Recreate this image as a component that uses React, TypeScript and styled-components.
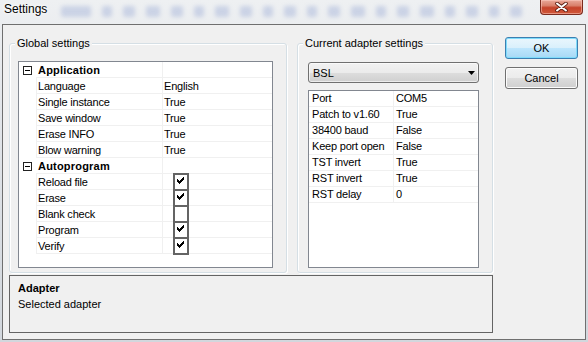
import React from 'react'
import styled, { createGlobalStyle, css } from 'styled-components'

const FONT = `"Liberation Sans", Arial, sans-serif`

type Item = { name: string; value?: string; checked?: boolean }
type Category = { title: string; items: Item[] }

const globalCategories: Category[] = [
  {
    title: 'Application',
    items: [
      { name: 'Language', value: 'English' },
      { name: 'Single instance', value: 'True' },
      { name: 'Save window', value: 'True' },
      { name: 'Erase INFO', value: 'True' },
      { name: 'Blow warning', value: 'True' },
    ],
  },
  {
    title: 'Autoprogram',
    items: [
      { name: 'Reload file', checked: true },
      { name: 'Erase', checked: true },
      { name: 'Blank check', checked: false },
      { name: 'Program', checked: true },
      { name: 'Verify', checked: true },
    ],
  },
]

const adapterItems: Item[] = [
  { name: 'Port', value: 'COM5' },
  { name: 'Patch to v1.60', value: 'True' },
  { name: '38400 baud', value: 'False' },
  { name: 'Keep port open', value: 'False' },
  { name: 'TST invert', value: 'True' },
  { name: 'RST invert', value: 'True' },
  { name: 'RST delay', value: '0' },
]

// blurred things seen through the glass title bar
const glassBlobs = [30, 10, 12, 14, 12, 10, 14, 12, 10, 12, 10, 12, 14, 10, 12, 14, 10, 12, 10, 12]

const GlobalStyle = createGlobalStyle`
  html, body {
    margin: 0;
    padding: 0;
  }
  body {
    font-family: ${FONT};
    font-size: 11px;
    color: #000;
    background: #d8dce1;
  }
  * {
    box-sizing: border-box;
  }
`

const Window = styled.div`
  width: 588px;
  height: 342px;
  display: flex;
  flex-direction: column;
  overflow: hidden;
  background: linear-gradient(180deg, #eef0f2 0%, #e3e6ea 30%, #d2d7dd 100%);
`

const TitleBar = styled.div`
  height: 24px;
  display: flex;
  align-items: flex-start;
  padding: 0 5px 0 4px;
`

const Title = styled.div`
  font-size: 12px;
  line-height: 15px;
  margin-top: 2px;
  text-shadow: 0 0 6px #fff, 0 0 3px #fff;
`

const GlassRow = styled.div`
  flex: 1;
  display: flex;
  gap: 11px;
  padding: 6px 0 0 14px;
  filter: blur(2px);
  opacity: 0.35;
`

const GlassBlob = styled.span<{ $w: number }>`
  width: ${({ $w }) => $w}px;
  height: 11px;
  border-radius: 2px;
  background: #8c9fd0;
`

const CloseButton = styled.div`
  width: 43px;
  height: 15px;
  display: flex;
  align-items: center;
  justify-content: center;
  border: 1px solid #7a2b1e;
  border-top: none;
  border-radius: 0 0 4px 4px;
  background: linear-gradient(180deg, #e9a99a 0%, #d9806b 40%, #c5432b 55%, #d0583a 100%);
  box-shadow: inset 0 0 0 1px rgba(255, 210, 200, 0.5);
`

const Client = styled.div`
  flex: 1;
  margin: 0 2px 2px 2px;
  border: 1px solid #6f6f6f;
  background: #f0f0f0;
  padding-top: 12px;
  display: flex;
  flex-direction: column;
`

const TopRow = styled.div`
  display: flex;
  align-items: flex-start;
  padding-left: 6px;
`

const GroupBox = styled.div<{ $w: number; $gap?: number; $padLeft: number; $padTop: number }>`
  position: relative;
  width: ${({ $w }) => $w}px;
  height: 230px;
  margin-top: 6px;
  margin-left: ${({ $gap }) => $gap ?? 0}px;
  padding: ${({ $padTop, $padLeft }) => `${$padTop}px 0 0 ${$padLeft}px`};
  border: 1px solid #d5dfe5;
  border-radius: 3px;
  box-shadow: inset 1px 1px 0 #fff, 1px 1px 0 #fff;
`

const GroupCaption = styled.span`
  position: absolute;
  top: -7px;
  left: 5px;
  padding: 0 2px;
  line-height: 12px;
  white-space: nowrap;
  background: #f0f0f0;
`

const PropertyGrid = styled.div<{ $w: number; $h: number }>`
  width: ${({ $w }) => $w}px;
  height: ${({ $h }) => $h}px;
  border: 1px solid #828790;
  background: #fff;
  overflow: hidden;
`

const GridRow = styled.div<{ $cols: string }>`
  display: grid;
  grid-template-columns: ${({ $cols }) => $cols};
  height: 16px;
`

const Gutter = styled.div`
  padding: 4px 0 0 4px;
`

const Cell = styled.div<{ $divider?: boolean; $bold?: boolean; $pad: number; $low?: boolean }>`
  height: 16px;
  padding-left: ${({ $pad }) => $pad}px;
  padding-top: ${({ $low }) => ($low ? 1 : 0)}px;
  border-bottom: 1px solid #f0f0f0;
  border-left: ${({ $divider }) => ($divider ? '1px solid #f0f0f0' : 'none')};
  line-height: 15px;
  white-space: nowrap;
  ${({ $bold }) =>
    $bold
      ? css`
          font-weight: bold;
          letter-spacing: 0.2px;
        `
      : css`
          letter-spacing: -0.2px;
        `}
`

const ExpandBox = styled.span`
  display: flex;
  align-items: center;
  justify-content: center;
  width: 9px;
  height: 9px;
  border: 1px solid #222;
  background: #fff;

  &::after {
    content: '';
    width: 5px;
    height: 1px;
    background: #000;
  }
`

const CheckBox = styled.span`
  display: block;
  width: 16px;
  height: 18px;
  margin: -1px 0 0 9px;
  padding: 2px 0 0 2px;
  border: 2px solid #646464;
  background: #fff;

  svg {
    display: block;
  }
`

const Combo = styled.div`
  width: 171px;
  height: 21px;
  margin-bottom: 7px;
  display: flex;
  align-items: center;
  justify-content: space-between;
  padding: 0 3px 0 4px;
  border: 1px solid #707070;
  border-radius: 3px;
  background: linear-gradient(180deg, #f2f2f2 0%, #ebebeb 50%, #dddddd 51%, #cfcfcf 100%);
  box-shadow: inset 0 0 0 1px rgba(255, 255, 255, 0.6);
`

const ButtonColumn = styled.div`
  display: flex;
  flex-direction: column;
  gap: 8px;
  margin-left: 12px;
`

const PushButton = styled.button<{ $default?: boolean }>`
  width: 73px;
  height: 22px;
  padding: 0;
  font: 11px ${FONT};
  color: #000;
  border-radius: 3px;
  border: 1px solid ${({ $default }) => ($default ? '#3c7fb1' : '#707070')};
  background: ${({ $default }) =>
    $default
      ? 'linear-gradient(180deg, #eaf6fd 0%, #d9f0fc 50%, #bee6fd 51%, #a7d9f5 100%)'
      : 'linear-gradient(180deg, #f2f2f2 0%, #ebebeb 50%, #dddddd 51%, #cfcfcf 100%)'};
  box-shadow: inset 0 0 0 1px ${({ $default }) => ($default ? '#7fdcfb' : '#fcfcfc')};
`

const Description = styled.div`
  width: 484px;
  height: 58px;
  margin: 2px 0 0 6px;
  padding: 4px 8px;
  border: 1px solid #646464;
  line-height: 16px;
`

const DescriptionTitle = styled.div`
  font-weight: bold;
`

function CheckMark() {
  return (
    <svg width="7" height="7" viewBox="0 0 7 7" shapeRendering="crispEdges">
      <path
        d="M0 2h1v3H0zM1 3h1v3H1zM2 4h1v3H2zM3 3h1v3H3zM4 2h1v3H4zM5 1h1v3H5zM6 0h1v3H6z"
        fill="#000"
      />
    </svg>
  )
}

function ComboArrow() {
  return (
    <svg width="7" height="4" viewBox="0 0 7 4">
      <path d="M0 0h7L3.5 4z" fill="#000" />
    </svg>
  )
}

function CloseGlyph() {
  return (
    <svg width="13" height="10" viewBox="0 0 13 10">
      <path d="M2 1.5L11 8.5M11 1.5L2 8.5" stroke="#5b1d12" strokeWidth="3.6" strokeLinecap="round" />
      <path d="M2 1.5L11 8.5M11 1.5L2 8.5" stroke="#fff" strokeWidth="2" strokeLinecap="round" />
    </svg>
  )
}

const GLOBAL_COLS = '17px 126px 1fr'
const ADAPTER_COLS = '84px 1fr'

function GlobalGrid() {
  return (
    <PropertyGrid $w={255} $h={207}>
      {globalCategories.map(cat => (
        <React.Fragment key={cat.title}>
          <GridRow $cols={GLOBAL_COLS}>
            <Gutter>
              <ExpandBox />
            </Gutter>
            <Cell $bold $low $pad={2}>
              {cat.title}
            </Cell>
            <Cell $divider $pad={1} />
          </GridRow>
          {cat.items.map(item => (
            <GridRow key={item.name} $cols={GLOBAL_COLS}>
              <Gutter />
              <Cell $divider $low $pad={1}>
                {item.name}
              </Cell>
              <Cell $divider $low={item.checked === undefined} $pad={1}>
                {item.checked === undefined ? (
                  item.value
                ) : (
                  <CheckBox>{item.checked && <CheckMark />}</CheckBox>
                )}
              </Cell>
            </GridRow>
          ))}
        </React.Fragment>
      ))}
    </PropertyGrid>
  )
}

function AdapterGrid() {
  return (
    <PropertyGrid $w={171} $h={178}>
      {adapterItems.map(item => (
        <GridRow key={item.name} $cols={ADAPTER_COLS}>
          <Cell $pad={3}>{item.name}</Cell>
          <Cell $divider $pad={2}>
            {item.value}
          </Cell>
        </GridRow>
      ))}
    </PropertyGrid>
  )
}

export default function App() {
  return (
    <>
      <GlobalStyle />
      <Window>
        <TitleBar>
          <Title>Settings</Title>
          <GlassRow>
            {glassBlobs.map((w, i) => (
              <GlassBlob key={i} $w={w} />
            ))}
          </GlassRow>
          <CloseButton>
            <CloseGlyph />
          </CloseButton>
        </TitleBar>
        <Client>
          <TopRow>
            <GroupBox $w={278} $padLeft={8} $padTop={17}>
              <GroupCaption>Global settings</GroupCaption>
              <GlobalGrid />
            </GroupBox>
            <GroupBox $w={196} $gap={10} $padLeft={10} $padTop={18}>
              <GroupCaption>Current adapter settings</GroupCaption>
              <Combo>
                <span>BSL</span>
                <ComboArrow />
              </Combo>
              <AdapterGrid />
            </GroupBox>
            <ButtonColumn>
              <PushButton $default>OK</PushButton>
              <PushButton>Cancel</PushButton>
            </ButtonColumn>
          </TopRow>
          <Description>
            <DescriptionTitle>Adapter</DescriptionTitle>
            <div>Selected adapter</div>
          </Description>
        </Client>
      </Window>
    </>
  )
}
